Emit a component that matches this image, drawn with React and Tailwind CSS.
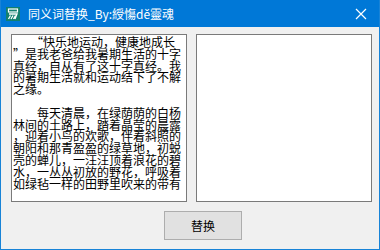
import React from 'react'

const lines = [
  '\u3000\u3000“快乐地运动，健康地成长',
  '”是我老爸给我暑期生活的十字',
  '真经，自从有了这十字真经。我',
  '的暑期生活就和运动结下了不解',
  '之缘。',
  '\u00a0',
  '\u3000\u3000每天清晨，在绿荫荫的白杨',
  '林间的土路上，踏着晶莹的晨露',
  '，迎着小鸟的欢歌，伴着斜照的',
  '朝阳和那青盈盈的绿草地，初蜕',
  '壳的蝉儿，一汪汪顶着浪花的碧',
  '水，一丛丛初放的野花，呼吸着',
  '如绿毡一样的田野里吹来的带有',
]

const AppIcon = () => (
  <svg width="14" height="14" viewBox="0 0 14 14">
    <rect width="14" height="14" fill="#12806f" />
    <rect x="2.5" y="2" width="9" height="3" fill="none" stroke="#fff" strokeWidth="1.2" />
    <path d="M3 7 H11 L9 12 M4.5 8.5 L2.5 12 M7 8.5 L5 12 M9.5 8.5 L7.5 12" fill="none" stroke="#fff" strokeWidth="1.3" />
  </svg>
)

export default function App() {
  return (
    <div
      className="w-[380px] h-[250px] flex flex-col bg-[#f0f0f0] border border-t-0 border-[#1883d7] overflow-hidden"
      style={{ fontFamily: '"Noto Sans CJK SC", "Liberation Sans", sans-serif' }}
    >
      {/* title bar */}
      <div className="h-[27px] shrink-0 bg-[#0078d7] flex items-center text-white -mx-px">
        <div className="ml-[6px] mt-[1px]">
          <AppIcon />
        </div>
        <span className="ml-[8px] text-[12px] leading-none">同义词替换_By:綬慯dě靈魂</span>
        <div className="ml-auto mr-[13px] w-[12px] h-[12px]">
          <svg width="12" height="12" viewBox="0 0 12 12">
            <path d="M1 1 L11 11 M11 1 L1 11" stroke="#fff" strokeWidth="1.2" />
          </svg>
        </div>
      </div>

      {/* client */}
      <div className="flex-1 flex flex-col pt-[7px] pl-[10px] pr-[7px]">
        <div className="flex gap-[9px]">
          <div className="w-[176px] h-[168px] bg-white border border-[#7a7a7a] overflow-hidden pl-[1px] pt-[1px]">
            {lines.map((l, i) => (
              <div key={i} className="text-[12px] leading-[11.8px] text-black whitespace-nowrap">
                {l}
              </div>
            ))}
          </div>
          <div className="w-[176px] h-[168px] bg-white border border-[#7a7a7a]" />
        </div>
        <div className="mt-[9px] pl-[153px]">
          <button className="w-[78px] h-[29px] bg-[#e1e1e1] border border-[#adadad] text-[12px] text-black">
            替换
          </button>
        </div>
      </div>
    </div>
  )
}
